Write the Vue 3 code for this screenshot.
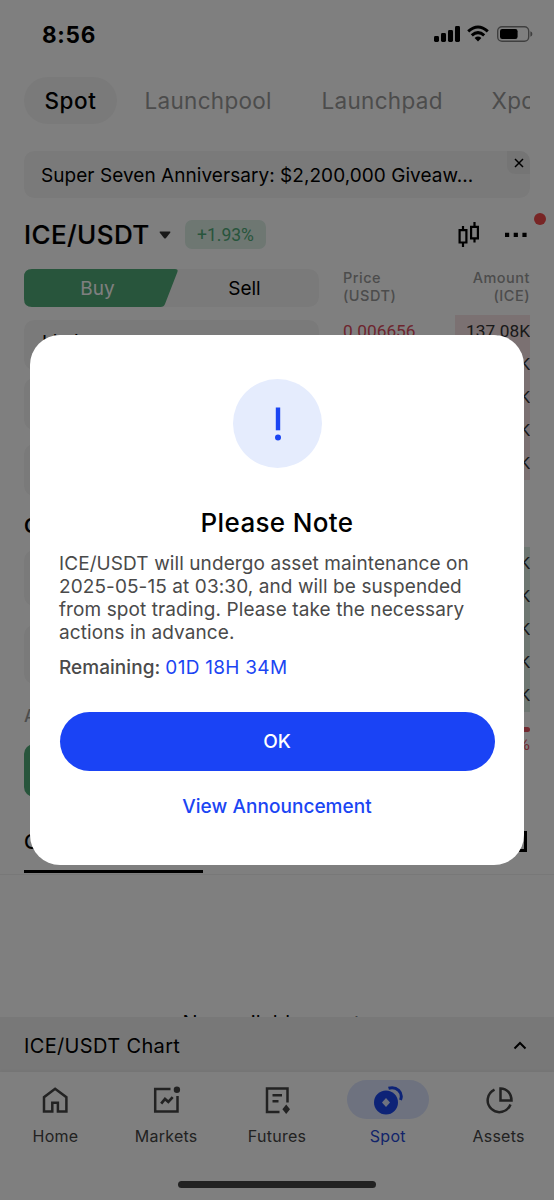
<script setup>
const asks = ['137.08K', '84.21K', '96.50K', '112.7K', '58.36K']
const bids = ['73.15K', '64.92K', '120.4K', '88.03K', '51.67K']
</script>

<template>
  <div class="screen">
    <div class="page">
      <header class="status">
        <span class="time">8:56</span>
        <svg class="status-icons" width="100" height="18" viewBox="0 0 100 18">
          <rect x="0" y="11" width="5" height="6" rx="1.4" />
          <rect x="7" y="8" width="5" height="9" rx="1.4" />
          <rect x="14" y="5" width="5" height="12" rx="1.4" />
          <rect x="21" y="1" width="5" height="16" rx="1.4" />
          <g fill="none" stroke="#000" stroke-width="3">
            <path d="M34.2 6.300Q44 -2.400 53.800 6.300" />
            <path d="M37.800 10.400Q44 4.800 50.200 10.400" />
          </g>
          <path d="M40.600 13Q44 10.200 47.400 13L44 16.600Z" />
          <rect x="63.700" y="1.700" width="31" height="14.600" rx="4.300" fill="none" stroke="#000" stroke-opacity=".5" stroke-width="1.400" />
          <rect x="66" y="4" width="17.600" height="10" rx="2.200" />
          <path d="M96.400 6.200Q98.400 7 98.400 9T96.400 11.800Z" fill-opacity=".5" />
        </svg>
      </header>

      <nav class="tabs">
        <span class="tab active">Spot</span>
        <span class="tab t1">Launchpool</span>
        <span class="tab t2">Launchpad</span>
        <span class="tab t3">Xpool</span>
      </nav>

      <div class="banner">
        <span>Super Seven Anniversary: $2,200,000 Giveaw...</span>
        <div class="close">
          <svg width="10" height="10" viewBox="0 0 10 10"><path d="M1 1L9 9M9 1L1 9" fill="none" stroke="#000" stroke-width="1.500" /></svg>
        </div>
      </div>

      <div class="pair">
        <h1>ICE/USDT</h1>
        <svg class="caret" width="12" height="8" viewBox="0 0 12 8"><path d="M1 .5H11Q12 .7 11 2L7 7Q6 8 5 7L1 2Q0 .7 1 .5Z" fill="#333" /></svg>
        <span class="change">+1.93%</span>
        <svg class="candles" width="22" height="26" viewBox="0 0 22 26" fill="none" stroke="#000" stroke-width="2.200">
          <path d="M1.600 8.100H8.400V20.500H1.600ZM5 8V4M5 20.500V25M13.100 4.900H19.900V16.300H13.100ZM16.500 4.900V0M16.500 16.300V20.500" />
        </svg>
        <svg class="dots" width="24" height="6" viewBox="0 0 24 6"><path d="M1 .8H5.200V5H1ZM9.700 .8H13.900V5H9.700ZM18.400 .8H22.600V5H18.400Z" /></svg>
        <i class="alert"></i>
      </div>

      <main class="trade">
        <section class="form">
          <div class="sides">
            <svg width="155" height="38" viewBox="0 0 155 38"><path d="M8 0H151Q154.500 0 153.400 3L141 35Q140 38 136.500 38H8Q0 38 0 30V8Q0 0 8 0Z" fill="#50aa78" /></svg>
            <span class="buy">Buy</span>
            <span class="sell">Sell</span>
          </div>
          <div class="field first"><span>Limit</span><i></i></div>
          <div class="field second"></div>
          <div class="field third"></div>
          <h2>Open</h2>
          <div class="field fourth"></div>
          <div class="field fifth"></div>
          <p class="avail">Available</p>
          <div class="submit"></div>
        </section>
        <section class="book">
          <div class="book-head">
            <span>Price<br />(USDT)</span>
            <span class="right">Amount<br />(ICE)</span>
          </div>
          <div class="asks">
            <div v-for="(a, i) in asks" :key="a" class="level">
              <span class="price">{{ i ? '' : '0.006656' }}</span><span class="amount">{{ a }}</span>
            </div>
          </div>
          <div class="bids">
            <div v-for="b in bids" :key="b" class="level"><span class="amount">{{ b }}</span></div>
          </div>
          <div class="ratio"></div>
          <div class="percent">48%</div>
        </section>
      </main>

      <div class="orders">
        <h2>Orders</h2>
        <i class="history"></i>
      </div>
      <div class="empty">No available assets</div>

      <div class="chart">
        <span>ICE/USDT Chart</span>
        <svg width="14" height="9" viewBox="0 0 14 9"><path d="M1.500 7.500L7 2L12.500 7.500" fill="none" stroke="#000" stroke-width="2" /></svg>
      </div>

      <footer class="dock">
        <div class="item">
          <div class="icon">
            <svg width="30" height="30" viewBox="0 0 30 30" fill="none" stroke="#444" stroke-width="2.500"><path d="M4 26.500V12.200L15.100 3.800L26.400 12.200V26.500H17.900V17.800H12.300V26.500Z" /></svg>
          </div>
          <span>Home</span>
        </div>
        <div class="item">
          <div class="icon">
            <svg width="30" height="30" viewBox="0 0 30 30" fill="none" stroke="#444" stroke-width="2.500">
              <path d="M19.500 4H4.200V26.500H26.500V11" /><path d="M10.200 18.700L14 14L17.300 16.800L21.700 12.100" stroke-width="2.700" /><circle cx="25.900" cy="4.700" r="3.200" fill="#444" stroke="none" />
            </svg>
          </div>
          <span>Markets</span>
        </div>
        <div class="item">
          <div class="icon">
            <svg width="30" height="30" viewBox="0 0 30 30" fill="none" stroke="#444" stroke-width="2.500">
              <path d="M17.500 27H5V3.500H25.500V17.500M10.500 10.200H20M10.500 16.200H16.500" /><path d="M24.200 19.500L28 24.200L24.200 28.900L20.400 24.200Z" fill="#444" stroke="none" />
            </svg>
          </div>
          <span>Futures</span>
        </div>
        <div class="item current">
          <div class="icon">
            <svg width="30" height="30" viewBox="0 0 30 30">
              <circle cx="13" cy="17.500" r="12" fill="#1a47ef" /><path d="M13 13L17 17.500L13 22L9 17.500Z" fill="#dce5ff" /><path d="M15.500 3.200C23.500 .8 30.500 7.500 27.500 15" fill="none" stroke="#1a47ef" stroke-width="3" />
            </svg>
          </div>
          <span>Spot</span>
        </div>
        <div class="item">
          <div class="icon">
            <svg width="30" height="30" viewBox="0 0 30 30" fill="none" stroke="#444" stroke-width="2.500"><path d="M10.500 4.600A11.800 11.800 0 1 0 26.500 19.500" /><path d="M16.500 3.500V15.500H27.500C27.500 8.500 23 3.500 16.500 3.500Z" /></svg>
          </div>
          <span>Assets</span>
        </div>
        <i class="handle"></i>
      </footer>
    </div>

    <div class="overlay">
      <div class="dialog">
        <div class="badge">
          <svg width="10" height="36" viewBox="0 0 10 36"><path d="M2.800 1.500H7.200V24.300H2.800Z" fill="#1b45f3" /><circle cx="5" cy="31.400" r="3" fill="#1b45f3" /></svg>
        </div>
        <h3>Please Note</h3>
        <p class="message">ICE/USDT will undergo asset maintenance on 2025-05-15 at 03:30, and will be suspended from spot trading. Please take the necessary actions in advance.</p>
        <p class="remaining">Remaining: <span>01D 18H 34M</span></p>
        <button>OK</button>
        <a>View Announcement</a>
      </div>
    </div>
  </div>
</template>

<style>
body { margin: 0; background: #808080; }
</style>

<style scoped>
* { box-sizing: border-box; }
h1, h2, h3, p { margin: 0; font-weight: 500; }
svg { display: block; flex: none; }
.screen { position: relative; width: 554px; height: 1200px; overflow: hidden; font-family: Inter, "Liberation Sans", sans-serif; color: #000; }
.page { height: 1200px; background: #fff; display: flex; flex-direction: column; }
.page > * { flex: none; }
.status { height: 77px; padding: 22px 20px 0 42px; display: flex; justify-content: space-between; }
.time { font-size: 22.500px; line-height: 25px; font-weight: 700; letter-spacing: .7px; }
.status-icons { margin-top: 3px; }
.tabs { height: 47px; margin: 0 24px; display: flex; overflow: hidden; align-items: center; white-space: nowrap; font-size: 22.500px; color: #999; }
.tab { flex: none; letter-spacing: .3px; }
.active { width: 93px; height: 47px; line-height: 47px; border-radius: 24px; background: #f5f5f5; color: #000; text-align: center; font-weight: 500; letter-spacing: .6px; }
.t1 { margin-left: 27.500px; width: 177px; }
.t2 { width: 170px; }
.banner { margin: 27px 24px 0; height: 47px; border-radius: 10px; background: #f5f5f5; padding-left: 17px; display: flex; justify-content: space-between; overflow: hidden; font-size: 19px; line-height: 49px; letter-spacing: .05px; }
.close { width: 23px; height: 23px; background: #ebebeb; border-radius: 0 0 0 8px; display: grid; place-items: center; }
.pair { position: relative; height: 71px; padding: 2px 26px 0 24px; display: flex; align-items: center; }
.pair h1 { width: 135px; font-size: 26px; line-height: 32px; font-weight: 500; letter-spacing: .4px; -webkit-text-stroke: .2px #000; }
.change { margin-left: 14px; width: 81px; height: 29px; line-height: 30px; border-radius: 7px; background: #dceee5; color: #50aa78; text-align: center; font-family: Roboto, sans-serif; font-size: 17.500px; }
.candles { margin-left: auto; }
.dots { margin-left: 24px; }
.alert { position: absolute; left: 534px; top: 15px; width: 12px; height: 12px; border-radius: 50%; background: #f04a4a; }
.trade { height: 531px; margin: 0 24px; display: flex; gap: 24px; overflow: hidden; }
.form { width: 295px; }
.sides { position: relative; height: 38px; border-radius: 10px; background: #f5f5f5; font-size: 19px; line-height: 39px; }
.buy, .sell { position: absolute; top: 0; width: 147px; text-align: center; }
.buy { left: 0; color: #fff; }
.sell { left: 147px; }
.field { height: 52px; border-radius: 10px; background: #f5f5f5; }
.first { height: 50px; margin-top: 13px; padding: 0 18px 5px; display: flex; align-items: center; gap: 7px; font-size: 19px; }
.first i { width: 14px; height: 14px; border-radius: 50%; background: #d5d5d5; }
.second { margin-top: 8px; }
.third { margin-top: 14px; }
.form h2, .orders h2 { font-size: 20px; line-height: 24px; font-weight: 600; }
.form h2 { margin-top: 18px; }
.fourth { height: 56px; margin-top: 12px; }
.fifth { height: 59px; margin-top: 19px; }
.avail { margin-top: 21px; font-size: 17px; line-height: 22px; color: #999; }
.submit { height: 53px; margin-top: 17px; border-radius: 10px; background: #50aa78; }
.book { flex: 1; }
.book-head { height: 46px; display: flex; justify-content: space-between; font-size: 14.500px; line-height: 18px; font-weight: 500; letter-spacing: .5px; color: #999; }
.right { text-align: right; }
.asks { height: 165px; background: linear-gradient(90deg, transparent 112px, #f6e2e5 112px); }
.level { height: 33px; line-height: 33px; display: flex; font-family: Roboto, sans-serif; font-size: 17.300px; }
.price { color: #dc4a5c; }
.amount { margin-left: auto; color: #333; }
.bids { height: 165px; margin-top: 67px; background: linear-gradient(90deg, transparent 112px, #dceee5 112px); }
.ratio { height: 5px; margin-top: 15px; border-radius: 3px; background: #e55260; }
.percent { text-align: right; margin-top: 3px; font-family: Roboto, sans-serif; font-size: 17px; line-height: 18px; color: #e55260; }
.orders { height: 75px; padding: 30px 27px 0 24px; display: flex; justify-content: space-between; border-bottom: 1px solid #f0f0f0; }
.orders h2 { width: 179px; height: 43px; border-bottom: 3px solid #000; font-weight: 500; }
.history { width: 20px; height: 21px; margin-top: 1px; border: 3px solid #000; }
.empty { height: 142px; padding-top: 136px; overflow: hidden; text-align: center; font-size: 20px; line-height: 24px; letter-spacing: .35px; }
.chart { height: 55px; padding: 2px 27px 0 24px; display: flex; align-items: center; justify-content: space-between; font-size: 20px; letter-spacing: .35px; background: #f1f1f1; }
.dock { position: relative; flex: none; height: 128px; background: #fff; display: grid; grid-template-columns: repeat(5, 110.800px); box-shadow: 0 -2px 3px rgba(0, 0, 0, .03); }
.item { padding-top: 8px; display: flex; flex-direction: column; align-items: center; font-size: 16px; line-height: 20px; letter-spacing: .25px; color: #444; }
.icon { width: 82px; height: 39px; border-radius: 20px; display: grid; place-items: center; margin-bottom: 7px; }
.current { color: #2649d5; }
.current .icon { background: #dce5ff; }
.handle { position: absolute; left: 178px; top: 109px; width: 198px; height: 7px; border-radius: 4px; background: #444; }
.overlay { position: absolute; inset: 0; background: rgba(0, 0, 0, .5); display: grid; place-items: center; }
.dialog { width: 494px; height: 530px; background: #fff; border-radius: 30px; padding: 44px 29px; display: flex; flex-direction: column; align-items: center; }
.badge { width: 89px; height: 89px; flex: none; border-radius: 50%; background: #e5ecfd; display: grid; place-items: center; margin-left: 1px; }
.dialog h3 { margin-top: 39px; font-size: 26px; line-height: 32px; letter-spacing: .35px; }
.message { width: 420px; align-self: flex-start; margin-top: 13px; font-size: 19px; line-height: 23px; letter-spacing: .09px; font-weight: 400; color: #4a4a4a; }
.remaining { align-self: flex-start; margin-top: 12px; font-size: 19px; line-height: 24px; letter-spacing: .04px; color: #4a4a4a; }
.remaining span { color: #1b45f3; font-weight: 400; letter-spacing: .28px; }
.dialog button { width: 435px; height: 59px; flex: none; margin-top: 32px; border: 0; border-radius: 30px; background: #1a43f5; color: #fff; font: 500 19px Inter, sans-serif; }
.dialog a { margin-top: 24px; font-size: 19px; line-height: 24px; font-weight: 500; letter-spacing: .05px; color: #1b45f3; }
</style>
